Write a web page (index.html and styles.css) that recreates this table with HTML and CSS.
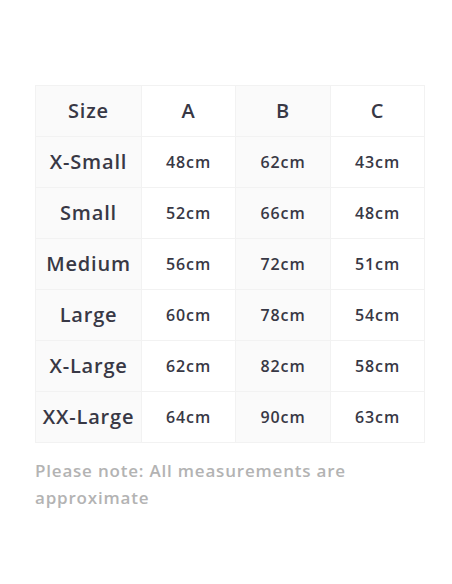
FILE: index.html
```html
<!DOCTYPE html>
<html>
<head>
<meta charset="utf-8">
<link rel="stylesheet" href="styles.css">
</head>
<body>
<div class="wrap">
  <table class="sizes">
    <tr><th class="c1">Size</th><th class="c2">A</th><th class="c3">B</th><th class="c4">C</th></tr>
    <tr><th class="c1">X-Small</th><td class="c2">48cm</td><td class="c3">62cm</td><td class="c4">43cm</td></tr>
    <tr><th class="c1">Small</th><td class="c2">52cm</td><td class="c3">66cm</td><td class="c4">48cm</td></tr>
    <tr><th class="c1">Medium</th><td class="c2">56cm</td><td class="c3">72cm</td><td class="c4">51cm</td></tr>
    <tr><th class="c1">Large</th><td class="c2">60cm</td><td class="c3">78cm</td><td class="c4">54cm</td></tr>
    <tr><th class="c1">X-Large</th><td class="c2">62cm</td><td class="c3">82cm</td><td class="c4">58cm</td></tr>
    <tr><th class="c1">XX-Large</th><td class="c2">64cm</td><td class="c3">90cm</td><td class="c4">63cm</td></tr>
  </table>
  <p class="note">Please note: All measurements are approximate</p>
</div>
</body>
</html>
```
FILE: styles.css
```css
html, body { margin: 0; padding: 0; background: #fff; }
body { font-family: "Open Sans", "Noto Sans", sans-serif; color: #383845; }
.wrap { width: 389px; padding: 85px 0 0 35px; }
.sizes { border-collapse: collapse; width: 385px; table-layout: fixed; }
.sizes th, .sizes td { border: 1px solid #f2f2f2; height: 50px; text-align: center; padding: 0; line-height: 46px; }
.sizes th { font-size: 20px; font-weight: 600; letter-spacing: 0.8px; }
.sizes td { font-size: 16px; font-weight: 600; letter-spacing: 0.9px; }
.c1 { width: 105px; background: #fafafa; }
.c2 { width: 93px; background: #fff; }
.c3 { width: 94px; background: #fafafa; }
.c4 { width: 93px; background: #fff; }
.note { margin: 14px 0 0; font-size: 17px; line-height: 27px; font-weight: 600; color: #b3b3b3; letter-spacing: 0.8px; }
```
